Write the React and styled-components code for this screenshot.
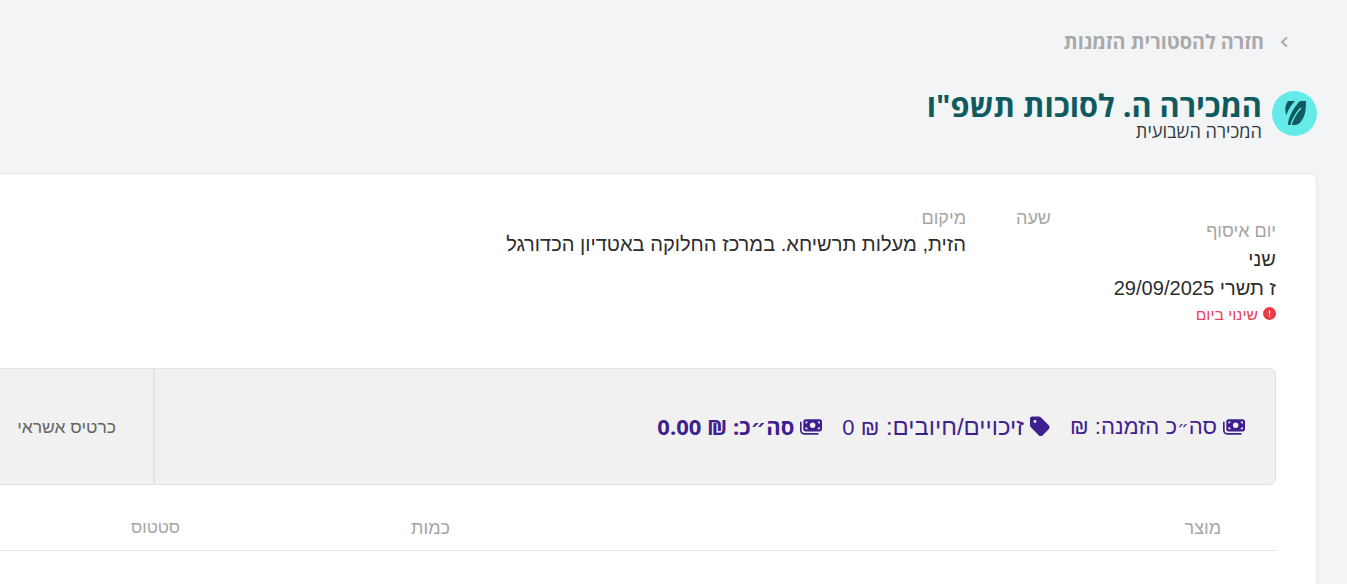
import React from "react";
import styled, { createGlobalStyle } from "styled-components";
import { FaTag, FaMoneyBills, FaCircleExclamation } from "react-icons/fa6";

const Global = createGlobalStyle`
  html, body { margin: 0; padding: 0; background: #f3f4f6; overflow: hidden; height: 584px; }
  body { font-family: "Liberation Sans", Arial, sans-serif; }
`;
const Page = styled.div`
  direction: rtl; width: 1347px; height: 584px; overflow: hidden; box-sizing: border-box;
  padding: 31px 30px 0 0;
`;
const BackLink = styled.a`
  display: flex; align-items: center; gap: 15px; height: 22px; padding-right: 26px;
  color: #a9a9a9; font-family: "Open Sans", sans-serif; font-size: 19.8px; font-weight: 700; line-height: 22px;
`;
const Chevron = styled.svg`width: 12px; height: 12px; flex: none;`;
const Header = styled.div`
  display: flex; align-items: center; gap: 10px; margin-top: 28px; height: 64px;
`;
const Badge = styled.div`
  width: 45px; height: 45px; border-radius: 50%; background: #64ebe9; flex: none;
  display: flex; align-items: center; justify-content: center;
`;
const Titles = styled.div`display: flex; flex-direction: column; padding-top: 2px;`;
const Title = styled.h1`
  margin: 0; font-family: "Open Sans", sans-serif; font-size: 30.7px; line-height: 34px; font-weight: 700; color: #0f5a5f;
`;
const Subtitle = styled.div`
  font-family: "Open Sans", sans-serif; font-size: 18.2px; line-height: 18px; color: #2f3a3f;
`;
const Card = styled.section`
  margin-top: 28px; margin-left: -40px; height: 500px; box-sizing: border-box;
  background: #fff; border: 1px solid #e5e7eb; border-radius: 6px;
  padding: 32px 40px 0 0;
`;
const Info = styled.div`display: flex; align-items: flex-start;`;
const Col = styled.div`
  width: ${p => p.$w}px; flex: none; padding-top: ${p => p.$top || 0}px;
`;
const Label = styled.div`
  color: #a6a6a6; font-size: 18px; line-height: 24px;
`;
const DayLabel = styled(Label)`margin-bottom: 2px;`;
const Value = styled.div`
  color: #2d2d2d; font-size: 20.1px; line-height: 29px; white-space: nowrap;
`;
const Change = styled.div`
  display: flex; align-items: center; gap: 5px; margin-top: 2px;
  color: #e8435a; font-size: 15.7px; line-height: 20px;
  svg { color: #e93b45; width: 13px; height: 13px; margin-top: -3px; }
`;
const Summary = styled.div`
  margin-top: 43px; height: 117px; box-sizing: border-box; display: flex; align-items: stretch;
  background: #f1f1f1; border: 1px solid #e3e3e3; border-radius: 6px;
`;
const Totals = styled.div`
  width: 1122px; flex: none; box-sizing: border-box; border-left: 2px solid #e4e4e4;
  display: flex; align-items: center; gap: 20px; padding-right: 30px;
`;
const Total = styled.div`
  display: flex; align-items: center; gap: 6px; color: #3f1f8f; font-size: ${p => p.$size}px;
  font-weight: 400; white-space: nowrap;
  svg { width: 22px; height: 20px; flex: none; }
`;
const GrandTotal = styled(Total)`
  font-family: "Open Sans", "DejaVu Sans", sans-serif; font-size: 22px; font-weight: 700; margin-top: -2px;
  svg { margin-top: 2px; }
`;
const Amount = styled.span`font-size: 22px;`;
const Gershayim = styled.span`font-family: "DejaVu Sans", sans-serif; font-size: 18px;`;
const TagIcon = styled(FaTag)`
  && { width: 20px; height: 23px; }
`;
const Payment = styled.div`
  display: flex; align-items: center; padding: 1px 37px 0 0; color: #666; font-size: 17.5px;
`;
const TableHead = styled.div`
  display: flex; height: 66px; box-sizing: border-box; padding-top: 32px;
  border-bottom: 1px solid #e5e5e5; color: #a6a6a6; font-size: 18px; line-height: 22px;
`;
const HeadCell = styled.div`
  width: ${p => p.$w}px; flex: none; padding-right: ${p => p.$pad}px; box-sizing: border-box;
  font-size: ${p => p.$size || 18}px;
`;

const Leaf = () => (
  <svg width="24" height="26" viewBox="0 0 24 26" fill="#0f5a5f">
    <path d="M5 1 H12 C 8 5 5 10 3.5 15 C 1.5 11 2 5 5 1 Z" />
    <path d="M23 1 C 23 10 22 16 19 20 C 17 24 14 25 11 25 H5 C 5 18 10 9 15 3 C 16 1.5 17 1 18 1 Z" />
    <path d="M8 25 C 10 18 14 12 18 8" fill="none" stroke="#64ebe9" strokeWidth="1.4" />
  </svg>
);

export default function App() {
  return (
    <>
      <Global />
      <Page>
        <BackLink>
          <Chevron viewBox="0 0 12 12" fill="none" stroke="#a9a9a9" strokeWidth="2"><path d="M8 1.5 L3 6 L8 10.5" /></Chevron>
          חזרה להסטורית הזמנות
        </BackLink>
        <Header>
          <Badge><Leaf /></Badge>
          <Titles>
            <Title>המכירה ה. לסוכות תשפ"ו</Title>
            <Subtitle>המכירה השבועית</Subtitle>
          </Titles>
        </Header>
        <Card>
          <Info>
            <Col $w={225} $top={13}>
              <DayLabel>יום איסוף</DayLabel>
              <Value>שני</Value>
              <Value>ז תשרי 29/09/2025</Value>
              <Change><FaCircleExclamation />שינוי ביום</Change>
            </Col>
            <Col $w={85}>
              <Label>שעה</Label>
            </Col>
            <Col $w={600}>
              <Label>מיקום</Label>
              <Value>הזית, מעלות תרשיחא. במרכז החלוקה באטדיון הכדורגל</Value>
            </Col>
          </Info>
          <Summary>
            <Totals>
              <Total $size={22.1}><FaMoneyBills /><span>סה<Gershayim>״</Gershayim>כ הזמנה: <Amount>₪</Amount></span></Total>
              <Total $size={23.9}><TagIcon /><span>זיכויים/חיובים: <Amount>₪ 0</Amount></span></Total>
              <GrandTotal><FaMoneyBills />סה״כ: ₪ 0.00</GrandTotal>
            </Totals>
            <Payment>כרטיס אשראי</Payment>
          </Summary>
          <TableHead>
            <HeadCell $w={826} $pad={55}>מוצר</HeadCell>
            <HeadCell $w={270} $pad={0}>כמות</HeadCell>
            <HeadCell $w={200} $pad={0} $size={17}>סטטוס</HeadCell>
          </TableHead>
        </Card>
      </Page>
    </>
  );
}
